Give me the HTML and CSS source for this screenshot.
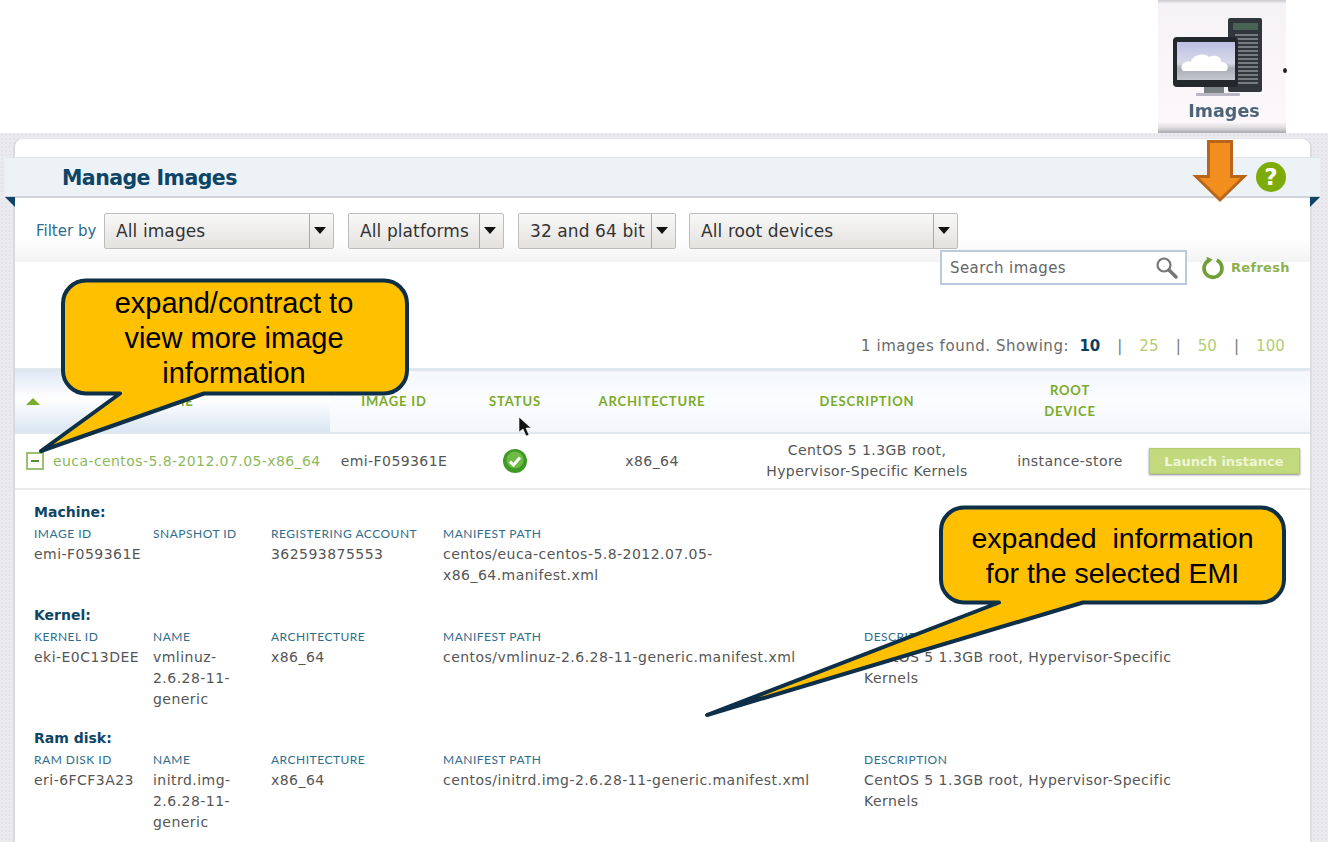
FILE: index.html

```html
<!DOCTYPE html>
<html lang="en">
<head>
  <meta charset="UTF-8" />
  <meta name="viewport" content="width=device-width, initial-scale=1.0" />
  <title>Manage Images</title>
  <link rel="stylesheet" href="styles.css">
</head>
<body>
  <div class="page">
    <div class="top">
      <div class="thumb">
        <svg class="thumb-art" width="128" height="100" viewBox="0 0 128 100">
          <defs>
            <linearGradient id="screen" x1="0" y1="0" x2="0" y2="1">
              <stop offset="0" stop-color="#bcc0e2" />
              <stop offset="0.55" stop-color="#d8dae8" />
              <stop offset="0.7" stop-color="#a9adb6" />
              <stop offset="1" stop-color="#c4c7cf" />
            </linearGradient>
          </defs>
          <rect x="70" y="18" width="34" height="74" rx="2" fill="#30363b" />
          <rect x="75" y="23" width="25" height="7" fill="#4a6453" />
          <path d="M77 35h23M77 39h23M77 43h23M77 47h23M77 51h23M77 55h23M77 59h23M77 63h23M77 67h23M77 71h23M77 75h23M77 79h23M77 83h23" stroke="#8d9298" stroke-width="1.6" />
          <rect x="46" y="86" width="20" height="7" fill="#7b8286" />
          <rect x="38" y="93" width="44" height="3" rx="1" fill="#b9b6c6" />
          <rect x="15" y="37" width="65" height="50" rx="4" fill="#23282d" />
          <rect x="19" y="42" width="58" height="38" fill="url(#screen)" />
          <path d="M25 71c-5-6 3-11 8-9 1-7 13-10 18-5 6-3 13 0 12 5 6 0 9 6 5 9z" fill="#fff" />
        </svg>
        <span class="thumb-label">Images</span>
      </div>
    </div>

    <div class="stage">
      <div class="panel">
        <div class="band">
          <h1>Manage Images</h1>
          <span class="help">?</span>
        </div>

        <div class="filters">
          <span class="filter-label">Filter by</span>
          <div class="select w1"><span class="select-text">All images</span><span class="select-btn"></span></div>
          <div class="select w2"><span class="select-text">All platforms</span><span class="select-btn"></span></div>
          <div class="select w3"><span class="select-text">32 and 64 bit</span><span class="select-btn"></span></div>
          <div class="select w4"><span class="select-text">All root devices</span><span class="select-btn"></span></div>
        </div>

        <div class="tools">
          <div class="search">
            <span>Search images</span>
            <svg width="26" height="26" viewBox="0 0 26 26">
              <circle cx="11" cy="10" r="6.5" fill="#fff" stroke="#777" stroke-width="2.2" />
              <path d="M16 15l7 7" stroke="#777" stroke-width="3.5" stroke-linecap="round" />
            </svg>
          </div>
          <div class="refresh">
            <svg width="24" height="24" viewBox="0 0 24 24">
              <path d="M8.2 4.2a9 9 0 1 0 7.6 0" fill="none" stroke="#6f9f35" stroke-width="3.6" />
              <path d="M5.5 0.8l6 2.6-4.6 4.4z" fill="#6f9f35" />
            </svg>
            <span>Refresh</span>
          </div>
        </div>

        <div class="count">
          1 images found. Showing:
          <b>10</b><i>|</i><a>25</a><i>|</i><a>50</a><i>|</i><a>100</a>
        </div>

        <table class="images">
          <thead>
            <tr>
              <th class="col-name sorted"><span class="sort-arrow"></span>NAME</th>
              <th class="col-id">IMAGE ID</th>
              <th class="col-status">STATUS</th>
              <th class="col-arch">ARCHITECTURE</th>
              <th class="col-desc">DESCRIPTION</th>
              <th class="col-root">ROOT<br>DEVICE</th>
              <th class="col-action"></th>
            </tr>
          </thead>
          <tbody>
            <tr>
              <td class="name-cell"><span class="toggle"></span><a>euca-centos-5.8-2012.07.05-x86_64</a></td>
              <td>emi-F059361E</td>
              <td>
                <svg class="status-ok" width="26" height="26" viewBox="0 0 26 26">
                  <circle cx="13" cy="13" r="12" fill="#3f9a25" />
                  <circle cx="13" cy="12" r="8.5" fill="#6dbb45" />
                  <path d="M8 13.5l3.5 3.5 6.5-7.5" fill="none" stroke="#fff" stroke-width="3" />
                </svg>
              </td>
              <td>x86_64</td>
              <td>CentOS 5 1.3GB root,<br>Hypervisor-Specific Kernels</td>
              <td>instance-store</td>
              <td><button class="launch">Launch instance</button></td>
            </tr>
          </tbody>
        </table>

        <div class="details">
          <h2>Machine:</h2>
          <div class="fields first">
            <div><label>IMAGE ID</label><p>emi-F059361E</p></div>
            <div><label>SNAPSHOT ID</label><p></p></div>
            <div><label>REGISTERING ACCOUNT</label><p>362593875553</p></div>
            <div><label>MANIFEST PATH</label><p>centos/euca-centos-5.8-2012.07.05-<br>x86_64.manifest.xml</p></div>
          </div>

          <h2>Kernel:</h2>
          <div class="fields">
            <div><label>KERNEL ID</label><p>eki-E0C13DEE</p></div>
            <div><label>NAME</label><p>vmlinuz-<br>2.6.28-11-<br>generic</p></div>
            <div><label>ARCHITECTURE</label><p>x86_64</p></div>
            <div><label>MANIFEST PATH</label><p>centos/vmlinuz-2.6.28-11-generic.manifest.xml</p></div>
            <div><label>DESCRIPTION</label><p>CentOS 5 1.3GB root, Hypervisor-Specific<br>Kernels</p></div>
          </div>

          <h2>Ram disk:</h2>
          <div class="fields">
            <div><label>RAM DISK ID</label><p>eri-6FCF3A23</p></div>
            <div><label>NAME</label><p>initrd.img-<br>2.6.28-11-<br>generic</p></div>
            <div><label>ARCHITECTURE</label><p>x86_64</p></div>
            <div><label>MANIFEST PATH</label><p>centos/initrd.img-2.6.28-11-generic.manifest.xml</p></div>
            <div><label>DESCRIPTION</label><p>CentOS 5 1.3GB root, Hypervisor-Specific<br>Kernels</p></div>
          </div>
        </div>
      </div>
    </div>

    <!-- annotations drawn on top of the screenshot -->
    <svg class="arrow" width="60" height="68" viewBox="0 0 60 68">
      <path d="M17.5 2.5h23v35H53L29 61 5 37.5h12.5z" fill="#f28e1e" stroke="#b8661a" stroke-width="3" />
    </svg>

    <svg class="cursor" width="14" height="22" viewBox="0 0 14 22">
      <path d="M1 1v15l4-3 3 7 3-1-3-7h5z" fill="#111" stroke="#fff" stroke-width="0.6" />
    </svg>

    <div class="callout callout-left">
      <svg width="400" height="190" viewBox="0 0 400 190">
        <path d="M47 3.5h298a23 23 0 0 1 23 23v67a23 23 0 0 1-23 23H165L2 174 81 116.5H47a23 23 0 0 1-23-23v-67a23 23 0 0 1 23-23z" fill="#ffc000" stroke="#0d2f47" stroke-width="4" stroke-linejoin="round" />
      </svg>
      <div class="callout-text">expand/contract to<br>view more image<br>information</div>
    </div>

    <div class="callout callout-right">
      <svg width="590" height="218" viewBox="0 0 590 218">
        <path d="M261 3.5h297a23 23 0 0 1 23 23v49a23 23 0 0 1-23 23H380L4 211 296 98.5h-35a23 23 0 0 1-23-23v-49a23 23 0 0 1 23-23z" fill="#ffc000" stroke="#0d2f47" stroke-width="4" stroke-linejoin="round" />
      </svg>
      <div class="callout-text">expanded&nbsp; information<br>for the selected EMI</div>
    </div>
  </div>
</body>
</html>
```

FILE: styles.css

```css
* { box-sizing: border-box; }
body { margin: 0; background: #fff; font-family: "DejaVu Sans", sans-serif; }
.page { position: relative; width: 1328px; height: 842px; overflow: hidden; }

/* top strip with the toolbar thumbnail */
.top { height: 133px; display: flex; justify-content: flex-end; padding-right: 42px; }
.thumb { position: relative; width: 128px; height: 133px; display: flex; flex-direction: column; align-items: center;
  background: linear-gradient(#c9c9cc 0, #f6f3f7 4px, #fbf7fb 122px, #dcdadd 128px, #a9a9ad 133px); }
.thumb::after { content: ""; position: absolute; right: -1px; top: 68px; width: 4px; height: 5px; border-radius: 50%; background: #222; }
.thumb-art { filter: blur(0.6px); flex: none; }
.thumb-label { margin-left: 4px; font-size: 17.5px; font-weight: bold; color: #4d6478; line-height: 22px; filter: blur(0.4px); }

/* main panel */
.stage { height: 709px; padding: 6px 18px 0 15px; background-color: #ebebef;
  background-image: radial-gradient(#e2e2e8 1px, transparent 1px); background-size: 4px 4px; }
.panel { height: 703px; background: #fff; border-radius: 8px 8px 0 0; padding-top: 18px; box-shadow: -2px 0 0 #d9d9de, 2px 0 0 #dcdce1; }

.band { position: relative; margin: 0 -10px; height: 41px; display: flex; align-items: center; padding: 2px 0 0 57px;
  background: #edf2f7; border-top: 1px solid #e2e6ea; border-bottom: 2px solid #cfd2d6; }
.band::before, .band::after { content: ""; position: absolute; top: 39px; width: 0; height: 0; border-top: 10px solid #0e4566; }
.band::before { left: 0; border-left: 10px solid transparent; }
.band::after { right: 0; border-right: 10px solid transparent; }
.band h1 { margin: 0; font-size: 20.5px; letter-spacing: -0.55px; font-weight: bold; color: #0e4566; }
.help { position: absolute; left: 1251px; top: 4px; width: 30px; height: 30px; border-radius: 50%; background: #7cab0a;
  color: #fff; font-size: 23px; font-weight: bold; line-height: 30px; text-align: center; }

.filters { height: 64px; padding: 15px 0 0 21px; display: flex; align-items: flex-start; background: linear-gradient(#fff 40px, #f3f3f3 64px); }
.filter-label { width: 68px; line-height: 37px; font-size: 15px; color: #2c6c8e; }
.select { height: 36px; margin-right: 14px; display: flex; border: 1px solid #bdbdbd; border-radius: 2px; background: linear-gradient(#f8f8f8, #e4e2df); }
.select-text { flex: 1; padding-left: 11px; line-height: 34px; font-size: 17px; letter-spacing: 0.1px; color: #333; }
.select-btn { position: relative; width: 24px; border-left: 1px solid #aaa; }
.select-btn::after { content: ""; position: absolute; left: 4px; top: 13px; border: 6px solid transparent; border-top: 7px solid #111; border-bottom: 0; }
.w1 { width: 230px; }
.w2 { width: 156px; }
.w3 { width: 158px; margin-right: 13px; }
.w4 { width: 269px; }

.tools { margin-top: -12px; height: 35px; display: flex; align-items: center; padding-left: 925px; }
.search { width: 247px; height: 35px; display: flex; align-items: center; justify-content: space-between; padding: 0 6px 0 8px;
  background: #fff; border: 2px solid #b9cbdc; font-size: 15px; letter-spacing: 0.4px; color: #666; }
.refresh { margin-left: 14px; display: flex; align-items: center; gap: 6px; font-size: 13px; letter-spacing: 0.3px; font-weight: bold; color: #8db04f; }

.count { height: 83px; padding: 50px 25px 0 0; text-align: right; font-size: 15px; line-height: 22px; letter-spacing: 0.55px; color: #6a6a6a; }
.count b { margin-left: 5px; color: #0e3f5c; letter-spacing: 0; }
.count i { margin: 0 17px; font-style: normal; color: #777; letter-spacing: 0; }
.count a { color: #b3cc73; letter-spacing: 0.1px; }

.images { width: 100%; table-layout: fixed; border-collapse: collapse; }
.images th { height: 63px; padding: 0; background: linear-gradient(#f4f7fb, #fbfcfe 50%, #f3f5f9); border-top: 3px solid #dfe7ef; border-bottom: 2px solid #dfe7ef;
  font-family: Lato, sans-serif; font-size: 13px; font-weight: bold; letter-spacing: 0.85px; line-height: 21px; color: #7aab2a; }
.images th.sorted { position: relative; background: linear-gradient(#dfe9f5, #fff 45%, #d9e5f2); }
.sort-arrow { position: absolute; left: 11px; top: 27px; border: 7px solid transparent; border-bottom: 7px solid #7aab2a; border-top: 0; }
.col-name { width: 315px; }
.col-id { width: 128px; }
.col-status { width: 114px; }
.col-arch { width: 160px; }
.col-desc { width: 270px; }
.col-root { width: 136px; }
.images td { height: 56px; padding: 1px 0 0; text-align: center; font-size: 14px; letter-spacing: 0.42px; line-height: 21px; color: #555; border-bottom: 2px solid #ececec; }
.images td.name-cell { padding-left: 11px; text-align: left; white-space: nowrap; }
.toggle { position: relative; display: inline-block; width: 18px; height: 18px; margin-right: 9px; vertical-align: middle; border: 2px solid #9bc274; }
.toggle::after { content: ""; position: absolute; left: 3px; top: 6px; width: 8px; height: 2px; background: #5d8a38; }
.name-cell a { color: #8cb85c; vertical-align: middle; }
.status-ok { display: block; margin: 0 auto; }
.launch { width: 151px; height: 26px; padding: 0; border: 1px solid #b5cc75; background: #c3d97e; box-shadow: 0 1px 2px #888;
  font-family: "DejaVu Sans", sans-serif; font-size: 13px; font-weight: bold; color: #eef6d8; }

/* expanded row */
.details { padding: 10px 0 0 19px; }
.details h2 { margin: 0; font-size: 14px; font-weight: bold; line-height: 24px; color: #0e4566; }
.fields { display: grid; grid-template-columns: 119px 118px 172px 421px 1fr; margin-bottom: 16px; }
.fields.first { margin-bottom: 17px; }
.fields label { display: block; height: 20px; font-family: Lato, sans-serif; font-size: 12px; line-height: 20px; letter-spacing: 0.5px; color: #2f6d8c; }
.fields p { margin: 0; font-size: 14px; line-height: 21px; letter-spacing: 0.46px; color: #555; }

/* annotations */
.arrow { position: absolute; left: 1191px; top: 139px; }
.cursor { position: absolute; left: 518px; top: 416px; }
.callout { position: absolute; }
.callout svg { display: block; }
.callout-text { position: absolute; text-align: center; font-family: "Liberation Sans", Arial, sans-serif; font-size: 29px; line-height: 35px; color: #000; }
.callout-left { left: 39px; top: 277px; }
.callout-left .callout-text { left: 24px; top: 9px; width: 342px; }
.callout-right { left: 703px; top: 504px; }
.callout-right .callout-text { left: 239px; top: 17px; width: 341px; font-size: 28.5px; }
```
